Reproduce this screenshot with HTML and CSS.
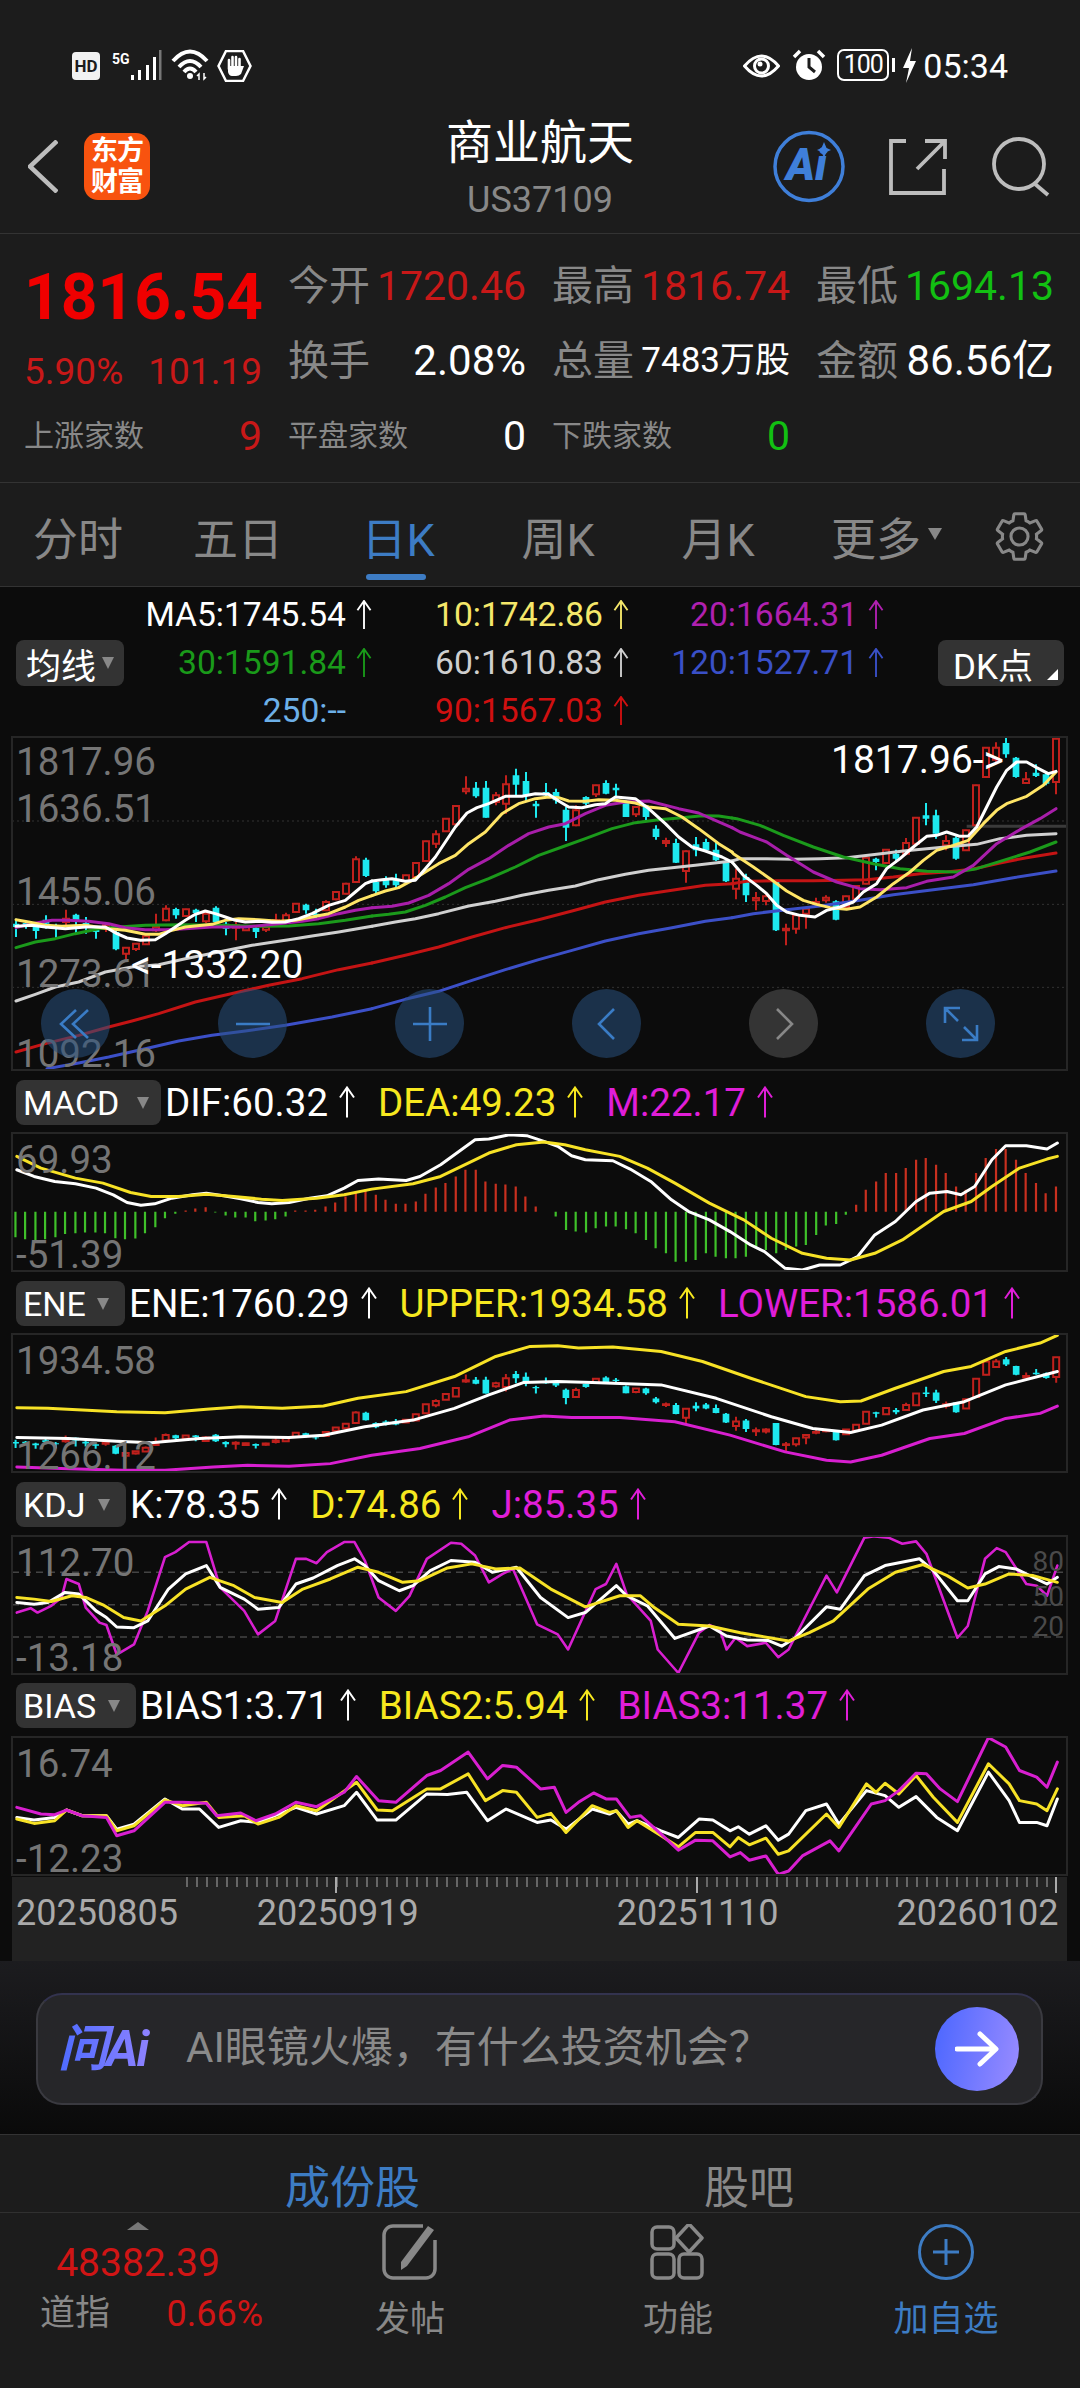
FILE: index.html
```html
<!DOCTYPE html>
<html lang="zh">
<head>
<meta charset="utf-8">
<title>商业航天</title>
<link rel="stylesheet" href="styles.css">
</head>
<body>
<svg class="defs" width="0" height="0"><symbol id="up" viewBox="0 0 18 32"><path d="M9 1V31M2 11L9 1L16 11" fill="none" stroke="currentColor" stroke-width="2"/></symbol></svg>
<div class="page">
  <header class="status">
    <div class="status-left">
      <span class="hd">HD</span>
      <span class="five-g">5G</span>
      <svg class="ic-signal" width="33" height="30" viewBox="0 0 33 30"><path d="M2 25h3v5H2zM9 20h3v10H9zM17 15h3v15h-3zM24 7h3v23h-3z" fill="#fff"/><path d="M30 0h2.500v30H30z" fill="#777"/></svg>
      <svg class="ic-wifi" width="38" height="32" viewBox="0 0 38 32"><path d="M2 12Q19 -7 36 12M8 18Q19 6 30 18M13 23Q19 16 25 23" fill="none" stroke="#fff" stroke-width="4"/><circle cx="19" cy="27" r="3" fill="#fff"/><path d="M28 31v-6l-2 2M33 24v6l2-2" fill="none" stroke="#fff" stroke-width="1.500"/></svg>
      <svg class="ic-hand" width="35" height="32" viewBox="0 0 35 32"><path d="M9 1H26L33.500 16L26 31H9L1.500 16Z" fill="none" stroke="#fff" stroke-width="2.500"/><path d="M12 19V10M15.500 17V7M19 17V7M22.500 18V9" stroke="#fff" stroke-width="2.600" stroke-linecap="round"/><path d="M11 16H24L27 16L24 24Q22 26 19 26H15Q12 26 11 22Z" fill="#fff"/></svg>
    </div>
    <div class="status-right">
      <svg width="37" height="28" viewBox="0 0 37 28"><path d="M1.500 14Q18.500 -6 35.500 14Q18.500 34 1.500 14Z" fill="none" stroke="#fff" stroke-width="3"/><circle cx="18.500" cy="14" r="7" fill="none" stroke="#fff" stroke-width="3"/><circle cx="17" cy="12" r="2.500" fill="#fff"/></svg>
      <svg class="ic-alarm" width="36" height="32" viewBox="0 0 36 32"><circle cx="18" cy="18" r="13" fill="#fff"/><path d="M18 9V18L24 23" fill="none" stroke="#1c1c1c" stroke-width="3"/><path d="M3 8L9 2M33 8L27 2" stroke="#fff" stroke-width="3.500"/></svg>
      <span class="batt">100</span>
      <span class="batt-nub"></span>
      <svg class="ic-bolt" width="13" height="35" viewBox="0 0 13 35"><path d="M9 0L0 20H6L3 35L13 13H7Z" fill="#fff"/></svg>
      <span class="clock">05:34</span>
    </div>
  </header>

  <nav class="nav">
    <div class="nav-left">
      <svg class="back" width="30" height="53" viewBox="0 0 30 53"><path d="M29 1L2 26.500L29 52" fill="none" stroke="#bdbdbd" stroke-width="4.500"/></svg>
      <div class="logo"><span>东方</span><span>财富</span></div>
    </div>
    <div class="nav-title">
      <div class="title">商业航天</div>
      <div class="code">US37109</div>
    </div>
    <div class="nav-right">
      <svg class="ic-ai" width="72" height="73" viewBox="0 0 72 73"><circle cx="36" cy="36.500" r="34" fill="none" stroke="#3f7fd9" stroke-width="3.500"/><text class="ai-text" x="13" y="50">Ai</text><path d="M51 12L53.500 18L58 20L53.500 22L51 28L48.500 22L44 20L48.500 18Z" fill="#3f7fd9"/></svg>
      <svg width="58" height="58" viewBox="0 0 58 58"><path d="M17 3H2V55H55V31M36 3H56V21M56 3L28 31" fill="none" stroke="#bdbdbd" stroke-width="3.800"/></svg>
      <svg width="60" height="60" viewBox="0 0 60 60"><circle cx="28" cy="27" r="25" fill="none" stroke="#bdbdbd" stroke-width="3.800"/><path d="M44 47L57 58" stroke="#bdbdbd" stroke-width="3.800"/></svg>
    </div>
  </nav>

  <section class="quote">
    <div class="cell price-cell"><span class="price">1816.54</span></div>
    <div class="cell"><span class="lbl">今开</span><span class="val up">1720.46</span></div>
    <div class="cell"><span class="lbl">最高</span><span class="val up">1816.74</span></div>
    <div class="cell"><span class="lbl">最低</span><span class="val down">1694.13</span></div>
    <div class="cell change-cell"><span class="chg">5.90%</span><span class="chg">101.19</span></div>
    <div class="cell"><span class="lbl">换手</span><span class="val val-lg">2.08%</span></div>
    <div class="cell"><span class="lbl">总量</span><span class="val val-sm">7483万股</span></div>
    <div class="cell"><span class="lbl">金额</span><span class="val val-lg">86.56亿</span></div>
    <div class="cell"><span class="lbl-sm">上涨家数</span><span class="val up">9</span></div>
    <div class="cell"><span class="lbl-sm">平盘家数</span><span class="val">0</span></div>
    <div class="cell"><span class="lbl-sm">下跌家数</span><span class="val down">0</span></div>
  </section>

  <div class="tabs">
    <div class="tab">分时</div>
    <div class="tab">五日</div>
    <div class="tab active">日K</div>
    <div class="tab">周K</div>
    <div class="tab">月K</div>
    <div class="tab tab-more">更多<span class="caret caret-sm"></span></div>
    <div class="tab-gear"><svg width="57" height="57" viewBox="0 0 24 24"><path d="M19.14 12.94c.04-.3.06-.61.06-.94 0-.32-.02-.64-.07-.94l2.03-1.58c.18-.14.23-.41.12-.61l-1.920-3.320c-.12-.22-.37-.29-.59-.22l-2.390.96c-.5-.38-1.030-.7-1.620-.94l-.36-2.540c-.04-.24-.24-.41-.48-.41h-3.840c-.24 0-.43.17-.47.41l-.36 2.540c-.59.24-1.130.57-1.620.94l-2.390-.96c-.22-.08-.47 0-.59.22L2.740 8.870c-.12.21-.08.47.12.61l2.030 1.580c-.05.3-.09.63-.09.94s.02.64.07.94l-2.030 1.580c-.18.14-.23.41-.12.61l1.920 3.320c.12.22.37.29.59.22l2.390-.96c.5.38 1.030.7 1.620.94l.36 2.54c.05.24.24.41.48.41h3.840c.24 0 .44-.17.47-.41l.36-2.540c.59-.24 1.130-.56 1.620-.94l2.390.96c.22.08.47 0 .59-.22l1.920-3.320c.12-.22.07-.47-.12-.61l-2.010-1.580zM12 15.600c-1.980 0-3.600-1.620-3.600-3.600s1.620-3.600 3.600-3.600 3.600 1.620 3.600 3.600-1.620 3.600-3.600 3.600z" fill="none" stroke="#888" stroke-width="1.300"/></svg></div>
  </div>

  <div class="ma-head">
    <span></span>
    <div class="ma c-white">MA5:1745.54<svg class="arr"><use href="#up"/></svg></div>
    <div class="ma c-ma10">10:1742.86<svg class="arr"><use href="#up"/></svg></div>
    <div class="ma c-ma20">20:1664.31<svg class="arr"><use href="#up"/></svg></div>
    <span></span>
    <div class="pill pill-ma">均线<span class="caret"></span></div>
    <div class="ma c-ma30">30:1591.84<svg class="arr"><use href="#up"/></svg></div>
    <div class="ma c-ma60">60:1610.83<svg class="arr"><use href="#up"/></svg></div>
    <div class="ma c-ma120">120:1527.71<svg class="arr"><use href="#up"/></svg></div>
    <div class="pill pill-dk">DK点<span class="corner"></span></div>
    <span></span>
    <div class="ma c-ma250">250:--<svg class="arr arr-hidden"><use href="#up"/></svg></div>
    <div class="ma c-ma90">90:1567.03<svg class="arr"><use href="#up"/></svg></div>
  </div>

  <div class="panel panel-main">
    <svg class="plot" viewBox="0 0 3165 999" preserveAspectRatio="none">
      <path class="grid" d="M0 252H3165M0 502H3165M0 751H3165"/>
      <path class="price-band" d="M2864 268H3165"/>
      <g id="candles">
        <path class="wick-r" d="M162 518V565M282 555V585M342 632V668M372 620V642M402 590V622M432 530V585M462 505V553M522 515V540M582 520V558M672 555V610M702 565V580M762 565V585M792 530V570M822 527V557M852 498V527M942 490V522M972 462V490M1002 437V472M1032 358V437M1182 413V434M1212 375V422M1242 311V374M1272 280V333M1302 243V285M1332 205V264M1362 118V172M1452 165V205M1482 115V230M1692 205V268M1752 143V180M1872 208V240M1962 302V330M2022 340V437M2172 395V487M2232 465V520M2262 470V505M2322 560V625M2352 533V590M2382 513V575M2412 482V510M2442 475V497M2502 476V512M2532 445V487M2562 360V442M2622 336V380M2682 303V355M2712 240V322M2802 295V340M2862 278V342M2892 143V267M2922 30V122M2952 16V75M3042 105V140M3132 3V172"/>
        <path class="body-r" d="M153 545h18V555h-18zM273 565h18V572h-18zM333 632h18V650h-18zM363 620h18V636h-18zM393 598h18V622h-18zM423 570h18V580h-18zM453 515h18V550h-18zM513 517h18V537h-18zM573 530h18V553h-18zM663 565h18V572h-18zM693 568h18V580h-18zM753 570h18V578h-18zM783 550h18V560h-18zM813 535h18V555h-18zM843 500h18V525h-18zM933 495h18V520h-18zM963 465h18V487h-18zM993 440h18V470h-18zM1023 367h18V435h-18zM1173 415h18V432h-18zM1203 378h18V420h-18zM1233 313h18V372h-18zM1263 292h18V320h-18zM1293 245h18V283h-18zM1323 207h18V262h-18zM1353 155h18V163h-18zM1443 175h18V195h-18zM1473 142h18V200h-18zM1683 220h18V265h-18zM1743 145h18V172h-18zM1863 210h18V232h-18zM1953 312h18V318h-18zM2013 343h18V402h-18zM2163 425h18V455h-18zM2223 483h18V490h-18zM2253 478h18V492h-18zM2313 575h18V580h-18zM2343 535h18V575h-18zM2373 515h18V530h-18zM2403 495h18V500h-18zM2433 482h18V490h-18zM2493 478h18V510h-18zM2523 447h18V485h-18zM2553 362h18V440h-18zM2613 338h18V378h-18zM2673 318h18V350h-18zM2703 242h18V320h-18zM2793 312h18V325h-18zM2853 280h18V340h-18zM2883 145h18V265h-18zM2913 32h18V120h-18zM2943 32h18V68h-18zM3033 127h18V138h-18zM3123 5h18V135h-18z"/>
        <path class="wick-c" d="M12 545V600M42 553V575M72 565V605M102 535V575M132 560V603M192 530V590M222 540V590M252 575V605M312 580V640M492 512V545M552 515V555M612 508V560M642 555V595M732 570V603M882 500V530M912 515V543M1062 362V420M1092 430V470M1122 418V452M1152 410V450M1392 135V182M1422 132V242M1512 95V175M1542 105V195M1572 192V242M1602 138V178M1632 155V200M1662 210V312M1722 178V205M1782 130V172M1812 140V180M1842 190V240M1902 205V250M1932 265V308M1992 305V378M2052 300V358M2082 305V345M2112 315V372M2142 370V435M2202 410V495M2292 435V582M2472 490V550M2592 362V400M2652 338V378M2742 198V265M2772 218V305M2832 298V368M2982 3V62M3012 60V122M3072 82V120M3102 105V145"/>
        <path class="body-c" d="M2 560h20V570h-20zM32 558h20V568h-20zM62 570h20V582h-20zM92 548h20V560h-20zM122 568h20V575h-20zM182 533h20V550h-20zM212 558h20V570h-20zM242 575h20V585h-20zM302 585h20V637h-20zM482 516h20V535h-20zM542 518h20V528h-20zM602 512h20V555h-20zM632 560h20V575h-20zM722 573h20V585h-20zM872 503h20V520h-20zM902 530h20V535h-20zM1052 368h20V417h-20zM1082 435h20V463h-20zM1112 425h20V445h-20zM1142 425h20V445h-20zM1382 152h20V178h-20zM1412 152h20V242h-20zM1502 115h20V143h-20zM1532 132h20V175h-20zM1562 200h20V208h-20zM1592 165h20V175h-20zM1622 165h20V190h-20zM1652 218h20V272h-20zM1712 180h20V200h-20zM1772 138h20V170h-20zM1802 152h20V160h-20zM1832 195h20V240h-20zM1892 210h20V240h-20zM1922 275h20V300h-20zM1982 318h20V377h-20zM2042 322h20V340h-20zM2072 315h20V340h-20zM2102 338h20V370h-20zM2132 375h20V433h-20zM2192 420h20V475h-20zM2282 435h20V580h-20zM2462 493h20V548h-20zM2582 365h20V375h-20zM2642 350h20V365h-20zM2732 235h20V245h-20zM2762 235h20V290h-20zM2822 302h20V365h-20zM2972 18h20V52h-20zM3002 62h20V120h-20zM3062 107h20V117h-20zM3092 112h20V140h-20z"/>
      </g>
      <g>
        <polyline class="ln l-ma120" points="105,995 200,978 290,960 400,935 500,912 600,895 700,882 820,865 960,840 1080,815"/>
        <polyline class="ln l-ma90" points="12,945 100,920 200,895 290,870 360,852 440,830 550,795 680,765 770,745 870,725 980,698 1080,678"/>
        <polyline class="ln l-ma60" points="12,792 70,772 130,750 200,735 280,705 360,690 440,683 520,665 620,645 720,625 830,608 900,597 980,585 1080,568"/>
        <polyline class="ln l-ma30" points="12,632 70,615 130,605 190,590 260,575 320,570 400,565 500,563 620,565 730,568 830,567 920,560 1000,550 1080,537"/>
        <polyline class="ln l-ma20" points="12,572 60,560 120,550 170,550 230,553 290,560 340,572 400,578 460,578 520,575 600,570 700,570 800,560 870,553 920,545 980,530 1030,520 1080,512"/>
        <polyline class="ln l-ma10" points="12,548 50,555 100,565 150,568 220,565 290,575 340,580 400,592 440,592 480,580 520,570 600,562 640,550 680,545 740,548 800,553 850,550 900,540 950,530 1000,510 1040,490 1080,476"/>
        <polyline class="ln l-ma5" points="12,568 60,565 100,570 160,575 220,570 280,570 315,590 345,603 385,610 430,608 460,590 490,570 520,550 550,532 580,522 610,530 640,540 670,550 700,555 740,553 780,556 820,555 860,545 900,530 950,505 1000,490 1030,465 1060,440 1080,432"/>
      </g>
      <g transform="translate(1080 0)">
        <polyline class="ln l-ma120" points="0,815 100,787 200,763 300,730 400,698 500,668 600,640 700,612 800,590 900,572 1000,553 1080,542"/>
        <polyline class="ln l-ma90" points="0,678 100,655 200,630 300,600 400,572 500,548 600,522 700,495 800,475 900,460 1000,445 1080,440"/>
        <polyline class="ln l-ma60" points="0,568 70,555 130,545 200,530 290,507 370,493 450,475 530,460 610,447 680,428 760,412 830,400 900,392 970,385 1080,372"/>
        <polyline class="ln l-ma30" points="0,537 50,532 100,525 160,505 220,480 280,452 350,425 430,390 500,355 570,330 640,305 720,275 790,257 860,248 930,242 990,236 1040,237 1080,243"/>
        <polyline class="ln l-ma20" points="0,512 60,508 110,498 170,475 230,440 290,397 350,365 410,325 470,290 530,270 580,260 640,230 700,205 760,195 830,192 920,215 980,228 1030,250 1080,272"/>
        <polyline class="ln l-ma10" points="0,476 40,462 80,452 120,430 160,405 200,380 250,355 290,320 340,285 390,230 440,200 490,185 530,180 560,182 590,192 640,193 680,188 730,190 790,198 830,210 880,215 930,240 980,275 1040,320 1080,345"/>
        <polyline class="ln l-ma5" points="0,432 30,428 60,425 100,433 130,430 160,395 190,360 220,315 250,270 285,228 315,212 350,200 400,178 450,178 490,170 530,172 560,192 590,210 630,212 670,203 700,200 730,180 790,185 830,215 880,260 920,300 960,330 1000,342 1050,360 1080,375"/>
      </g>
      <g transform="translate(2124 0)">
        <polyline class="ln l-ma120" points="36,542 100,530 200,518 300,507 420,490 520,473 640,458 760,443 880,422 1008,402"/>
        <polyline class="ln l-ma90" points="36,440 80,433 170,431 280,431 370,430 440,428 520,420 600,410 680,405 760,396 840,378 920,362 1008,348"/>
        <polyline class="ln l-ma60" points="36,372 60,365 140,365 220,367 300,365 380,362 470,352 550,342 620,335 700,328 770,322 840,305 920,295 1008,290"/>
        <polyline class="ln l-ma30" points="36,243 50,245 120,265 190,295 280,330 370,360 460,380 540,395 620,403 710,405 770,395 850,370 930,345 1008,315"/>
        <polyline class="ln l-ma20" points="36,272 60,285 140,315 200,355 280,405 350,435 420,455 480,458 560,452 620,433 700,420 760,385 830,320 900,278 960,245 1008,215"/>
        <polyline class="ln l-ma10" points="36,345 40,350 100,390 150,425 200,462 250,490 290,502 330,512 380,517 420,510 470,480 520,440 570,405 610,370 650,340 700,325 745,310 790,260 830,220 860,200 920,178 970,145 1008,105"/>
        <polyline class="ln l-ma5" points="36,375 70,415 110,445 140,470 170,505 200,525 240,535 285,540 320,520 360,510 400,495 430,465 470,440 500,395 540,365 580,330 620,298 650,295 680,285 720,298 745,297 770,270 800,210 830,150 860,100 890,75 920,75 950,92 985,110 1008,103"/>
      </g>
    </svg>
    <span class="axis ax-m1">1817.96</span>
    <span class="axis ax-m2">1636.51</span>
    <span class="axis ax-m3">1455.06</span>
    <span class="axis ax-m4">1273.61</span>
    <span class="axis ax-m5">1092.16</span>
    <span class="note note-high">1817.96-&gt;</span>
    <span class="note note-low">&lt;-1332.20</span>
    <div class="float-btns">
      <span class="fbtn"><svg class="fic" viewBox="-20 -20 40 40"><path d="M0 -14L-15 0L0 14M12 -14L-3 0L12 14"/></svg></span>
      <span class="fbtn"><svg class="fic" viewBox="-20 -20 40 40"><path d="M-17 0H17"/></svg></span>
      <span class="fbtn"><svg class="fic" viewBox="-20 -20 40 40"><path d="M-17 0H17M0 -17V17"/></svg></span>
      <span class="fbtn"><svg class="fic" viewBox="-20 -20 40 40"><path d="M7 -15L-8 0L7 15"/></svg></span>
      <span class="fbtn fbtn-grey"><svg class="fic" viewBox="-20 -20 40 40"><path d="M-7 -15L8 0L-7 15"/></svg></span>
      <span class="fbtn"><svg class="fic" viewBox="-20 -20 40 40"><path d="M-16 -1V-16H-1M-16 -16L-3 -3M16 1V16H1M16 16L3 3"/></svg></span>
    </div>
  </div>

  <div class="ind-row">
    <div class="pill pill-macd">MACD<span class="caret"></span></div>
    <div class="ind c-white">DIF:60.32<svg class="arr arr-lg"><use href="#up"/></svg></div>
    <div class="ind c-yellow">DEA:49.23<svg class="arr arr-lg"><use href="#up"/></svg></div>
    <div class="ind c-mag">M:22.17<svg class="arr arr-lg"><use href="#up"/></svg></div>
  </div>
  <div class="panel">
    <svg class="plot" viewBox="18 160 1531 413" preserveAspectRatio="none">
      <path class="bar-g" d="M23 396V472M37 396V478M52 396V480M66 396V478M81 396V472M95 396V462M110 396V460M124 396V458M139 396V458M153 396V460M168 396V475M182 396V478M197 396V476M211 396V460M226 396V442M240 396V415M255 396V402M313 396V398M328 396V407M342 396V413M357 396V413M371 396V424M386 396V422M400 396V418M415 396V410M807 396V410M822 396V450M836 396V455M851 396V458M865 396V445M880 396V440M894 396V440M909 396V448M923 396V460M938 396V480M952 396V505M967 396V520M981 396V545M996 396V545M1010 396V540M1025 396V520M1039 396V530M1054 396V535M1068 396V535M1083 396V530M1098 396V500M1112 396V510M1127 396V520M1141 396V510M1156 396V500M1170 396V495M1185 396V465M1199 396V437M1214 396V432M1228 396V405"/>
      <path class="bar-r" d="M270 396V392M284 396V386M299 396V382M429 396V392M444 396V392M458 396V390M473 396V380M487 396V368M502 396V350M517 396V335M531 396V328M546 396V345M560 396V360M575 396V372M589 396V372M604 396V365M618 396V342M633 396V323M647 396V310M662 396V290M676 396V270M691 396V270M705 396V305M720 396V312M734 396V314M749 396V320M763 396V350M778 396V380M1243 396V375M1257 396V330M1272 396V305M1286 396V280M1301 396V280M1315 396V265M1330 396V240M1344 396V235M1359 396V255M1373 396V280M1388 396V320M1402 396V330M1417 396V280M1431 396V235M1446 396V208M1460 396V208M1475 396V240M1489 396V280M1504 396V310M1518 396V340M1533 396V320"/>
      <polyline class="ln l-white" points="25,270 50,290 80,305 110,312 140,325 165,345 185,368 205,376 225,372 250,355 280,345 300,340 325,348 350,357 375,368 395,372 420,368 450,355 475,348 500,325 520,302 550,298 590,302 610,290 640,255 670,210 690,180 710,178 740,165 765,168 790,185 810,200 830,228 850,240 890,243 915,268 945,305 975,360 1000,395 1030,420 1060,455 1090,495 1110,515 1140,565 1165,570 1190,555 1220,555 1245,530 1270,465 1300,425 1330,365 1350,340 1375,335 1395,345 1415,320 1440,240 1460,198 1490,198 1520,208 1535,190"/>
      <polyline class="ln l-yellow" points="25,230 60,265 110,295 150,310 190,338 220,350 260,350 300,343 340,350 380,358 410,362 460,355 500,345 540,328 600,312 640,290 680,250 710,220 750,195 790,187 820,195 850,210 900,230 940,265 980,310 1030,370 1080,420 1120,475 1165,520 1200,535 1235,540 1270,520 1310,480 1370,395 1410,365 1440,320 1480,265 1520,238 1535,230"/>
    </svg>
    <span class="axis ax-s1">69.93</span>
    <span class="axis ax-s2">-51.39</span>
  </div>

  <div class="ind-row">
    <div class="pill pill-ene">ENE<span class="caret"></span></div>
    <div class="ind c-white">ENE:1760.29<svg class="arr arr-lg"><use href="#up"/></svg></div>
    <div class="ind c-yellow">UPPER:1934.58<svg class="arr arr-lg"><use href="#up"/></svg></div>
    <div class="ind c-mag">LOWER:1586.01<svg class="arr arr-lg"><use href="#up"/></svg></div>
  </div>
  <div class="panel">
    <svg class="plot" viewBox="18 763 1531 412" preserveAspectRatio="none">
      <use href="#candles" transform="matrix(.484 0 0 .4557 17.42 830.2)"/>
      <polyline class="ln l-yellow" points="25,983 70,985 120,990 170,995 240,998 300,988 350,980 410,985 470,978 520,955 590,935 660,890 720,830 770,800 810,798 840,805 890,802 960,815 1020,845 1090,895 1170,950 1220,965 1250,963 1300,925 1370,875 1410,860 1460,815 1510,790 1535,767"/>
      <polyline class="ln l-white" points="25,1072 100,1075 170,1083 220,1088 290,1075 350,1070 420,1072 470,1065 530,1040 600,1020 660,985 710,945 760,908 810,905 860,908 960,915 1040,955 1120,1010 1180,1045 1235,1057 1280,1035 1340,990 1400,965 1460,915 1535,875"/>
      <polyline class="ln l-mag" points="25,1160 100,1165 180,1170 240,1170 310,1160 360,1155 420,1158 480,1150 540,1125 610,1105 680,1070 740,1020 790,1008 830,1012 900,1012 980,1025 1060,1065 1140,1115 1200,1140 1235,1145 1280,1125 1350,1075 1400,1060 1460,1015 1510,1000 1535,978"/>
    </svg>
    <span class="axis ax-s1">1934.58</span>
    <span class="axis ax-s2">1266.12</span>
  </div>

  <div class="ind-row ind-row-tall">
    <div class="pill pill-kdj">KDJ<span class="caret"></span></div>
    <div class="ind c-white">K:78.35<svg class="arr arr-lg"><use href="#up"/></svg></div>
    <div class="ind c-yellow">D:74.86<svg class="arr arr-lg"><use href="#up"/></svg></div>
    <div class="ind c-mag">J:85.35<svg class="arr arr-lg"><use href="#up"/></svg></div>
  </div>
  <div class="panel">
    <svg class="plot" viewBox="18 167 1531 411" preserveAspectRatio="none">
      <path class="dash" d="M18 275H1549M18 372H1549M18 468H1549"/>
      <polyline class="ln l-mag l-thin" points="25,395 45,382 55,395 75,375 90,350 97,295 115,310 125,380 145,425 155,432 170,520 195,490 215,390 240,230 255,215 275,185 300,185 320,320 355,390 375,460 400,420 430,235 445,235 460,248 475,215 500,185 515,185 530,240 550,350 575,390 595,345 620,235 655,187 670,190 690,225 710,305 730,280 745,265 760,335 780,430 810,460 825,505 865,325 880,310 895,250 910,340 945,420 955,505 985,575 1015,455 1030,432 1045,445 1055,505 1068,470 1085,495 1112,485 1130,528 1145,505 1200,285 1215,335 1255,172 1270,168 1290,172 1310,190 1330,183 1345,220 1390,470 1405,435 1430,235 1447,203 1460,215 1490,310 1505,315 1520,345 1535,255"/>
      <polyline class="ln l-white" points="25,365 50,370 70,365 95,335 115,340 140,390 155,410 170,438 195,440 215,420 245,325 270,280 300,255 320,320 355,355 375,385 405,380 430,310 455,292 490,255 515,235 530,255 550,300 580,330 600,315 625,270 655,240 690,245 715,275 750,260 785,350 825,410 850,395 895,315 910,345 940,375 980,472 1030,435 1055,465 1085,477 1115,478 1135,495 1155,470 1200,378 1220,385 1255,285 1285,255 1335,235 1355,270 1390,360 1405,360 1430,280 1450,258 1475,265 1500,290 1520,310 1535,290"/>
      <polyline class="ln l-yellow" points="25,350 50,355 75,362 105,345 125,350 150,372 180,410 205,420 240,375 270,325 305,290 340,315 370,350 410,365 440,325 480,295 520,260 550,275 585,305 610,300 650,262 685,250 720,265 755,262 800,325 850,378 900,345 930,345 950,380 985,430 1030,435 1075,455 1145,480 1175,455 1210,420 1260,325 1300,275 1340,252 1375,285 1405,322 1430,310 1465,280 1500,285 1535,305"/>
    </svg>
    <span class="axis ax-s1">112.70</span>
    <span class="axis ax-s2">-13.18</span>
    <span class="axis-r ax-r1">80</span>
    <span class="axis-r ax-r2">50</span>
    <span class="axis-r ax-r3">20</span>
  </div>

  <div class="ind-row ind-row-last">
    <div class="pill pill-bias">BIAS<span class="caret"></span></div>
    <div class="ind c-white">BIAS1:3.71<svg class="arr arr-lg"><use href="#up"/></svg></div>
    <div class="ind c-yellow">BIAS2:5.94<svg class="arr arr-lg"><use href="#up"/></svg></div>
    <div class="ind c-mag">BIAS3:11.37<svg class="arr arr-lg"><use href="#up"/></svg></div>
  </div>
  <div class="panel">
    <svg class="plot" viewBox="18 770 1531 412" preserveAspectRatio="none">
      <polyline class="ln l-white" points="25,1010 50,1018 80,1010 97,988 120,1005 155,1005 170,1045 195,1030 240,955 265,985 290,985 318,1040 350,1020 375,1025 405,1000 430,980 460,1000 500,975 518,935 548,1018 575,1018 620,940 650,942 678,935 708,1020 735,985 780,1025 800,1018 822,1045 860,985 885,1000 895,990 912,1030 925,1020 960,1050 985,1070 1015,1015 1035,1018 1060,1050 1072,1038 1088,1060 1112,1035 1130,1078 1145,1060 1170,990 1200,970 1218,1030 1258,930 1285,945 1305,980 1330,948 1360,1010 1390,1050 1435,875 1465,960 1480,1025 1505,1025 1520,1035 1535,955"/>
      <polyline class="ln l-yellow" points="25,1015 50,1028 80,1020 97,988 120,1005 155,1005 170,1050 195,1035 240,958 265,975 300,965 318,1010 355,1005 375,1030 405,1010 430,975 460,990 518,905 548,988 570,990 620,925 640,925 680,880 705,960 730,930 750,935 780,1010 800,998 822,1055 860,975 885,995 895,990 912,1040 925,1020 960,1065 985,1098 1010,1055 1035,1055 1060,1098 1072,1070 1088,1092 1112,1072 1130,1120 1145,1110 1200,1000 1218,1040 1258,910 1272,935 1285,908 1305,940 1330,885 1355,950 1390,1025 1435,850 1465,910 1480,960 1505,970 1520,990 1535,925"/>
      <polyline class="ln l-mag" points="25,980 60,1000 80,1002 97,988 120,1005 155,1010 170,1065 195,1050 240,965 265,965 300,968 315,1005 350,997 372,1020 400,1000 430,965 460,978 500,935 518,888 550,960 575,965 620,885 640,870 680,815 708,895 730,855 750,860 785,925 805,920 822,995 840,965 862,937 880,955 895,955 915,1010 930,1005 960,1060 985,1108 1010,1078 1035,1080 1060,1128 1075,1115 1088,1138 1112,1125 1130,1180 1145,1170 1165,1125 1205,1080 1218,1110 1265,970 1285,960 1305,930 1330,878 1345,880 1365,925 1390,963 1435,772 1460,800 1480,870 1505,890 1520,920 1535,845"/>
    </svg>
    <span class="axis ax-s1">16.74</span>
    <span class="axis ax-s2">-12.23</span>
  </div>

  <div class="time-axis">
    <svg class="ticks" viewBox="12 0 1055 16" width="1055" height="16"><line class="tick" x1="186" x2="1057" y1="5" y2="5"/><path class="tick-major" d="M336 0V16M697 0V16M1056 0V16"/></svg>
    <div class="dates"><span class="d1">20250805</span><span class="d2">20250919</span><span class="d3">20251110</span><span class="d4">20260102</span></div>
  </div>

  <div class="ask-zone">
    <div class="ask">
      <span class="ask-logo">问Ai</span>
      <span class="ask-text">AI眼镜火爆，有什么投资机会？</span>
      <span class="ask-go"><svg width="44" height="36" viewBox="0 0 44 36"><path d="M2 18H40M25 3L41 18L25 33" fill="none" stroke="#fff" stroke-width="5" stroke-linecap="round" stroke-linejoin="round"/></svg></span>
    </div>
  </div>

  <div class="sub-tabs"><span class="sub-active">成份股</span><span>股吧</span></div>

  <footer class="bottom">
    <div class="idx">
      <span class="idx-tri"></span>
      <span class="idx-price">48382.39</span>
      <div class="idx-row"><span class="idx-name">道指</span><span class="idx-pct">0.66%</span></div>
    </div>
    <div class="bot-item">
      <svg width="56" height="56" viewBox="0 0 56 56"><path d="M41 2H11A9 9 0 0 0 2 11V45A9 9 0 0 0 11 54H44A9 9 0 0 0 53 45V16" fill="none" stroke="#888" stroke-width="3.500"/><path d="M19 38L46 2L52 6L25 42L19 46Z" fill="#888"/></svg>
      <span>发帖</span>
    </div>
    <div class="bot-item">
      <svg width="56" height="56" viewBox="0 0 56 56"><g fill="none" stroke="#888" stroke-width="3.500"><rect x="2" y="3" width="22" height="22" rx="5"/><path d="M39 0L52 14L39 28L26 14Z" stroke-linejoin="round"/><rect x="2" y="30" width="22" height="24" rx="5"/><rect x="29" y="30" width="23" height="24" rx="5"/></g></svg>
      <span>功能</span>
    </div>
    <div class="bot-item bot-blue">
      <svg width="56" height="56" viewBox="0 0 56 56"><circle cx="28" cy="28" r="26.500" fill="none" stroke="#3d7cc4" stroke-width="3"/><path d="M15 28H41M28 15V41" stroke="#3d7cc4" stroke-width="3"/></svg>
      <span>加自选</span>
    </div>
  </footer>
</div>
</body>
</html>
```
FILE: styles.css
```css
* { box-sizing: border-box; }
html, body { margin: 0; padding: 0; background: #0c0c0c; }
body { font-family: Roboto, "Noto Sans CJK SC", sans-serif; color: #fff; }
.defs { position: absolute; }
.page { width: 1080px; height: 2388px; overflow: hidden; display: flex; flex-direction: column; }

/* status bar */
.status { height: 100px; background: #1c1c1c; display: flex; justify-content: space-between; padding: 49px 72px 0 72px; flex: none; }
.status-left, .status-right { display: flex; align-items: flex-start; height: 34px; }
.hd { width: 28px; height: 28px; margin-top: 3px; background: #f2f2f2; color: #1c1c1c; border-radius: 4px; font-size: 17px; font-weight: 700; line-height: 28px; text-align: center; }
.five-g { font-size: 14px; font-weight: 700; line-height: 14px; margin: 3px 0 0 12px; width: 17px; }
.ic-signal { margin-top: 1px; }
.ic-wifi { margin: 0 0 0 9px; }
.ic-hand { margin: 1px 0 0 8px; }
.status-right svg { margin-top: 3px; }
.status-right .ic-alarm { margin: 0 0 0 11px; }
.batt { width: 52px; height: 32px; margin-left: 10px; border: 2px solid #fff; border-radius: 7px; font-size: 25px; line-height: 28px; text-align: center; letter-spacing: -1px; }
.batt-nub { width: 3px; height: 14px; background: #fff; margin: 9px 0 0 3px; }
.status-right .ic-bolt { margin: -1px 7px 0 8px; }
.clock { font-size: 34px; line-height: 34px; }

/* nav */
.nav { height: 134px; background: #1c1c1c; display: grid; grid-template-columns: 1fr auto 1fr; border-bottom: 1px solid #333; flex: none; }
.nav-left { display: flex; align-items: center; padding-left: 28px; }
.back { flex: none; }
.logo { width: 66px; height: 67px; margin-left: 26px; background: #f8530f; border-radius: 14px; display: flex; flex-direction: column; align-items: center; justify-content: center; font-size: 27px; font-weight: 700; line-height: 31px; letter-spacing: -1px; }
.nav-title { text-align: center; padding-top: 18px; }
.title { font-size: 47px; line-height: 50px; }
.code { font-size: 36px; line-height: 40px; margin-top: 12px; color: #888; }
.nav-right { display: flex; align-items: center; justify-content: flex-end; gap: 44px; padding-right: 29px; }
.ai-text { font-size: 44px; font-weight: 900; font-style: italic; fill: #3f7fd9; font-family: Roboto, sans-serif; }

/* quote */
.quote { height: 249px; background: #1c1c1c; padding: 14px 25px 0 24px; display: grid; grid-template-columns: repeat(4, 238px); column-gap: 26px; grid-auto-rows: 75px; border-bottom: 1px solid #333; flex: none; }
.cell { display: flex; justify-content: space-between; align-items: center; white-space: nowrap; }
.price-cell { padding-top: 24px; }
.change-cell { padding-top: 22px; }
.price { font-size: 64px; font-weight: 700; color: #f00000; line-height: 64px; }
.chg { font-size: 37px; color: #c81818; }
.lbl { font-size: 41px; line-height: 50px; color: #888; }
.lbl-sm { font-size: 30px; line-height: 40px; color: #888; }
.val { font-size: 41px; line-height: 50px; }
.val-lg { font-size: 42px; }
.val-sm { font-size: 35px; }
.up { color: #c81818; }
.down { color: #12c012; }

/* tabs */
.tabs { height: 104px; background: #1c1c1c; display: flex; align-items: center; padding: 3px 0 0; border-bottom: 1px solid #333; flex: none; }
.tab { width: 160px; height: 100%; display: flex; align-items: center; justify-content: center; font-size: 45px; color: #888; position: relative; flex: none; }
.tab:first-child { margin-left: -2px; }
.tab.active { color: #3d7cc4; }
.tab.active::after { content: ""; position: absolute; left: 48px; bottom: 6px; width: 60px; height: 6px; border-radius: 3px; background: #3d7cc4; }
.tab-more { justify-content: flex-start; padding-left: 33px; }
.tab-gear { flex: 1; display: flex; justify-content: center; }
.caret { display: inline-block; width: 0; height: 0; border-left: 6px solid transparent; border-right: 6px solid transparent; border-top: 12px solid #888; margin-left: 6px; }
.caret-sm { border-left-width: 7px; border-right-width: 7px; margin-left: 7px; margin-top: -4px; }

/* MA legend */
.ma-head { height: 150px; display: grid; grid-template-columns: 124px 249px 257px 255px 1fr; grid-auto-rows: 48px; padding-top: 4px; flex: none; align-items: center; }
.ma { display: flex; justify-content: flex-end; align-items: center; gap: 9px; font-size: 33.6px; line-height: 48px; white-space: nowrap; }
.arr { width: 18px; height: 30px; flex: none; }
.arr-lg { height: 33px; }
.arr-hidden { visibility: hidden; }
.pill { height: 46px; background: #333; border-radius: 8px; display: flex; align-items: center; font-size: 34px; color: #fff; position: relative; flex: none; }
.ind-row .pill { height: 45px; }
.pill-ma { width: 108px; margin-left: 16px; padding-left: 10px; font-size: 35px; }
.pill-dk { width: 126px; margin-left: 53px; padding-left: 15px; font-size: 35px; }
.corner { position: absolute; right: 6px; bottom: 6px; width: 11px; height: 11px; background: #fff; clip-path: polygon(100% 0, 100% 100%, 0 100%); }
.pill-macd { width: 145px; padding-left: 7px; }
.pill-macd .caret { margin-left: 18px; }
.pill-ene { width: 109px; padding-left: 7px; }
.pill-ene .caret { margin-left: 11px; }
.pill-kdj { width: 110px; padding-left: 7px; }
.pill-kdj .caret { margin-left: 13px; }
.pill-bias { width: 120px; padding-left: 7px; }
.pill-bias .caret { margin-left: 12px; }
.c-white { color: #fff; }
.c-yellow { color: #f7e81f; }
.c-mag { color: #e01ed8; }
.c-ma10 { color: #f5e76a; }
.c-ma20 { color: #b020b0; }
.c-ma30 { color: #1a9a1a; }
.c-ma60 { color: #cfcfcf; }
.c-ma120 { color: #3a50c8; }
.c-ma250 { color: #6db0e8; }
.c-ma90 { color: #d01010; }

/* indicator rows */
.ind-row { height: 63px; padding: 10px 0 8px 16px; display: flex; align-items: center; flex: none; }
.ind-row-tall { height: 64px; padding: 10px 0 9px 16px; }
.ind-row-last { padding: 9px 0 9px 16px; }
.ind { display: flex; align-items: center; gap: 10px; font-size: 38.5px; line-height: 45px; white-space: nowrap; margin-left: 22px; }
.pill + .ind { margin-left: 4px; }

/* chart panels */
.panel { width: 1055px; height: 138px; margin-left: 12px; position: relative; outline: 2px solid #262626; outline-offset: -1px; flex: none; }
.panel-main { height: 333px; }
.plot { display: block; width: 100%; height: 100%; }
.plot .ln { fill: none; vector-effect: non-scaling-stroke; stroke-width: 3; stroke-linejoin: round; stroke-linecap: round; }
.plot .l-thin { stroke-width: 2.6; }
.l-ma5, .l-white { stroke: #fff; }
.l-ma10 { stroke: #ffe566; }
.l-yellow { stroke: #f7e226; }
.l-ma20 { stroke: #a81eaa; }
.l-mag { stroke: #d81fd0; }
.l-ma30 { stroke: #1b9a1b; }
.l-ma60 { stroke: #d0d0d0; }
.l-ma90 { stroke: #c41414; }
.l-ma120 { stroke: #3c50c8; }
.grid { fill: none; stroke: #333; stroke-width: 1; stroke-dasharray: 2 3; vector-effect: non-scaling-stroke; }
.dash { fill: none; stroke: #444; stroke-width: 1.5; stroke-dasharray: 7 5; vector-effect: non-scaling-stroke; }
.price-band { fill: none; stroke: #3a3a3a; stroke-width: 3; vector-effect: non-scaling-stroke; }
.wick-r, .wick-c, .body-r, .body-c { vector-effect: non-scaling-stroke; stroke-width: 2; }
.wick-r { fill: none; stroke: #c0201c; }
.wick-c { fill: none; stroke: #1de9ef; }
.body-r { fill: #0c0c0c; stroke: #c0201c; }
.body-c { fill: #1de9ef; stroke: none; }
.bar-g, .bar-r { fill: none; stroke-width: 2.2; vector-effect: non-scaling-stroke; }
.bar-g { stroke: #3fc02a; }
.bar-r { stroke: #c8301f; }
.axis, .axis-r, .note { position: absolute; line-height: 38px; white-space: nowrap; }
.axis { left: 4px; font-size: 38.5px; color: #757575; }
.axis-r { right: 3px; font-size: 28px; color: #4a4a4a; line-height: 28px; }
.note { font-size: 39px; color: #fff; }
.ax-m1 { top: 6px; }
.ax-m2 { top: 53px; }
.ax-m3 { top: 136px; }
.ax-m4 { top: 218px; }
.ax-m5 { top: 298px; }
.ax-s1 { top: 8px; }
.ax-s2 { top: 103px; }
.ax-r1 { top: 12px; }
.ax-r2 { top: 47px; }
.ax-r3 { top: 77px; }
.note-high { left: 819px; top: 4px; }
.note-low { left: 119px; top: 209px; }
.float-btns { position: absolute; left: 29px; top: 252px; display: flex; gap: 108px; }
.fbtn { width: 69px; height: 69px; border-radius: 50%; background: rgba(40, 80, 125, .55); display: flex; align-items: center; justify-content: center; }
.fbtn-grey { background: rgba(70, 70, 70, .7); }
.fic { width: 40px; height: 40px; fill: none; stroke: #3a7cc5; stroke-width: 2.6; }
.fbtn-grey .fic { stroke: #888; }

/* time axis */
.time-axis { width: 1055px; height: 84px; margin: 2px 0 0 12px; background: #222; flex: none; }
.ticks { display: block; }
.tick { stroke: #666; stroke-width: 10; stroke-dasharray: 2 8; }
.tick-major { fill: none; stroke: #aaa; stroke-width: 2; }
.dates { display: flex; font-size: 36px; line-height: 40px; color: #aaa; padding-left: 4px; }
.d2 { margin-left: 79px; }
.d3 { margin-left: 198px; }
.d4 { margin-left: 118px; }

/* ask */
.ask-zone { height: 174px; padding: 32px 37px 0 36px; background: linear-gradient(#1c1c1f, #0a0a0a); border-bottom: 1px solid #333; flex: none; }
.ask { height: 112px; border-radius: 26px; background: #262629; border: 2px solid #3a3a40; border-top-color: #33334f; display: flex; align-items: center; padding: 0 22px 0 20px; }
.ask-logo { font-size: 50px; font-weight: 700; font-style: italic; line-height: 56px; background: linear-gradient(90deg, #4d6bff, #a78bff); -webkit-background-clip: text; background-clip: text; color: transparent; width: 128px; flex: none; letter-spacing: -2px; white-space: nowrap; }
.ask-text { font-size: 42px; line-height: 50px; color: #8a8a8a; flex: 1; white-space: nowrap; margin-top: -3px; }
.ask-go { width: 84px; height: 84px; border-radius: 50%; background: linear-gradient(100deg, #4a66ff, #9a8cff); display: flex; align-items: center; justify-content: center; flex: none; }

/* sub tabs */
.sub-tabs { height: 78px; background: #1c1c1c; display: flex; align-items: flex-end; padding-left: 285px; gap: 284px; font-size: 45px; line-height: 46px; color: #888; border-bottom: 1px solid #303030; flex: none; }
.sub-active { color: #3d7cc4; }

/* bottom */
.bottom { flex: 1; background: #1c1c1c; display: grid; grid-template-columns: 276px repeat(3, 268px); }
.idx { display: flex; flex-direction: column; align-items: center; padding-top: 9px; }
.idx-tri { width: 0; height: 0; border-left: 11px solid transparent; border-right: 11px solid transparent; border-bottom: 8px solid #777; }
.idx-price { font-size: 39px; line-height: 40px; color: #d01515; margin-top: 13px; }
.idx-row { align-self: stretch; display: flex; justify-content: space-between; padding: 0 13px 0 40px; margin-top: 11px; line-height: 40px; }
.idx-name { font-size: 35px; color: #888; }
.idx-pct { font-size: 36px; color: #d01515; }
.bot-item { display: flex; flex-direction: column; align-items: center; padding-top: 11px; font-size: 35px; line-height: 40px; color: #888; }
.bot-item span { margin-top: 20px; }
.bot-blue { color: #3d7cc4; }
```
